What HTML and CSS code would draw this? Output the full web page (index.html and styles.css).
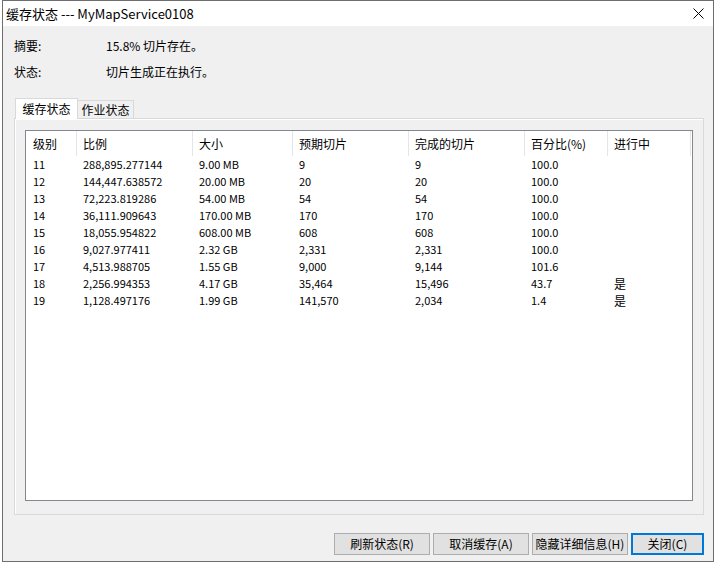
FILE: index.html
```html
<!DOCTYPE html>
<html lang="zh">
<head>
<meta charset="utf-8">
<title>缓存状态</title>
<link rel="stylesheet" href="styles.css">
</head>
<body>
<div class="window">
  <div class="titlebar">
    <span class="title">缓存状态 --- MyMapService0108</span>
    <svg class="close" width="11" height="11" viewBox="0 0 11 11"><path d="M0.5 0.5 L10.5 10.5 M10.5 0.5 L0.5 10.5" stroke="#000" stroke-width="1" fill="none"/></svg>
  </div>
  <div class="body">
    <div class="info">
      <div class="info-row"><span class="label">摘要:</span><span>15.8% 切片存在。</span></div>
      <div class="info-row"><span class="label">状态:</span><span>切片生成正在执行。</span></div>
    </div>
    <div class="tabs">
      <div class="tab active">缓存状态</div>
      <div class="tab">作业状态</div>
    </div>
    <div class="pane">
      <div class="listview">
        <div class="row header">
          <div>级别</div><div>比例</div><div>大小</div><div>预期切片</div><div>完成的切片</div><div>百分比(%)</div><div>进行中</div>
        </div>
        <div class="row data"><div>11</div><div>288,895.277144</div><div>9.00 MB</div><div>9</div><div>9</div><div>100.0</div><div></div></div>
        <div class="row data"><div>12</div><div>144,447.638572</div><div>20.00 MB</div><div>20</div><div>20</div><div>100.0</div><div></div></div>
        <div class="row data"><div>13</div><div>72,223.819286</div><div>54.00 MB</div><div>54</div><div>54</div><div>100.0</div><div></div></div>
        <div class="row data"><div>14</div><div>36,111.909643</div><div>170.00 MB</div><div>170</div><div>170</div><div>100.0</div><div></div></div>
        <div class="row data"><div>15</div><div>18,055.954822</div><div>608.00 MB</div><div>608</div><div>608</div><div>100.0</div><div></div></div>
        <div class="row data"><div>16</div><div>9,027.977411</div><div>2.32 GB</div><div>2,331</div><div>2,331</div><div>100.0</div><div></div></div>
        <div class="row data"><div>17</div><div>4,513.988705</div><div>1.55 GB</div><div>9,000</div><div>9,144</div><div>101.6</div><div></div></div>
        <div class="row data"><div>18</div><div>2,256.994353</div><div>4.17 GB</div><div>35,464</div><div>15,496</div><div>43.7</div><div>是</div></div>
        <div class="row data"><div>19</div><div>1,128.497176</div><div>1.99 GB</div><div>141,570</div><div>2,034</div><div>1.4</div><div>是</div></div>
      </div>
    </div>
    <div class="buttons">
      <button class="btn">刷新状态(R)</button>
      <button class="btn">取消缓存(A)</button>
      <button class="btn">隐藏详细信息(H)</button>
      <button class="btn default">关闭(C)</button>
    </div>
  </div>
</div>
</body>
</html>
```

FILE: styles.css
```css
html, body {
  margin: 0;
  padding: 0;
  background: #ffffff;
}
body {
  font-family: "Noto Sans CJK SC", "Noto Sans", sans-serif;
  font-size: 12px;
  color: #000;
}
.window {
  box-sizing: border-box;
  width: 712px;
  height: 562px;
  margin-left: 2px;
  border: 1px solid #6e6e6e;
  display: flex;
  flex-direction: column;
  background: #f0f0f0;
}
.titlebar {
  height: 25px;
  background: #ffffff;
  display: flex;
  align-items: center;
  justify-content: space-between;
  padding: 0 9px 0 3px;
  flex: none;
}
.title {
  font-size: 13px;
  line-height: 24px;
}
.close {
  display: block;
  margin-top: -1px;
}
.body {
  flex: 1;
  display: flex;
  flex-direction: column;
  padding: 7px 9px 0 0;
}
.info-row {
  display: flex;
  height: 26px;
  line-height: 26px;
  padding-left: 11px;
}
.label {
  width: 92px;
}
.tabs {
  display: flex;
  align-items: flex-end;
  height: 20px;
  margin-top: 13px;
  padding-left: 12px;
}
.tab {
  box-sizing: border-box;
  border: 1px solid #d9d9d9;
  border-bottom: none;
  text-align: center;
  line-height: 17px;
  background: #f0f0f0;
  height: 18px;
  width: 57px;
  margin-left: -1px;
}
.tab.active {
  position: relative;
  z-index: 1;
  background: #ffffff;
  height: 21px;
  width: 63px;
  margin-left: 0;
  margin-bottom: -1px;
  line-height: 20px;
}
.pane {
  box-sizing: border-box;
  margin-left: 11px;
  width: 690px;
  height: 397px;
  border: 1px solid #d9d9d9;
  box-shadow: inset 1px 1px 0 #ffffff;
  padding: 11px 10px 13px 10px;
}
.listview {
  box-sizing: border-box;
  height: 100%;
  border: 1px solid #828790;
  background: #ffffff;
}
.row {
  display: grid;
  grid-template-columns: 51px 116px 100px 116px 116px 83px 83px;
  height: 17px;
  line-height: 17px;
}
.row > div {
  padding-left: 6px;
  white-space: nowrap;
  overflow: hidden;
}
.row > div:first-child {
  padding-left: 7px;
}
.row.data {
  font-size: 11px;
}
.row.data > div:last-child {
  font-size: 12px;
}
.row.header {
  height: 25px;
  line-height: 25px;
}
.row.header > div {
  border-right: 1px solid #e5e5e5;
}
.buttons {
  display: flex;
  justify-content: flex-end;
  gap: 3px;
  margin-top: 18px;
}
.btn {
  box-sizing: border-box;
  width: 96px;
  height: 22px;
  background: #e1e1e1;
  border: 1px solid #adadad;
  font-family: "Noto Sans CJK SC", "Noto Sans", sans-serif;
  font-size: 12px;
  color: #000;
  padding: 0;
  line-height: 18px;
}
.btn.default {
  width: 73px;
  border: 2px solid #0078d7;
}
```
